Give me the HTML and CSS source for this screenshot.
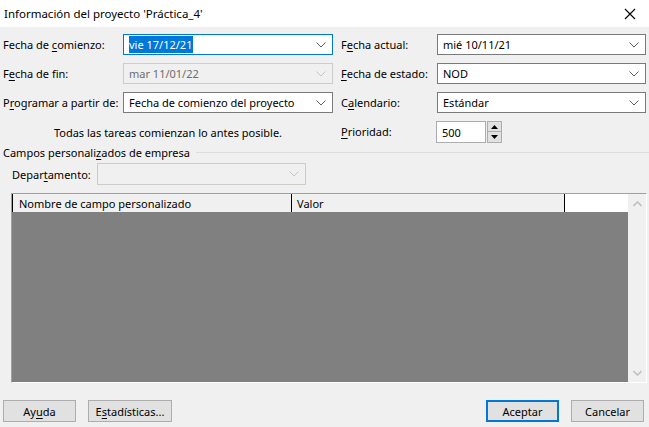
FILE: index.html
```html
<!DOCTYPE html>
<html lang="es">
<head>
<meta charset="utf-8">
<title>Información del proyecto</title>
<link rel="stylesheet" href="styles.css">
</head>
<body>
<div class="dialog">
  <div class="titlebar">
    <span class="title">Información del proyecto 'Práctica_4'</span>
    <svg class="close" width="12" height="12" viewBox="0 0 12 12"><path d="M1 1 L11 11 M11 1 L1 11" stroke="#000" stroke-width="1.1" fill="none"/></svg>
  </div>
  <div class="content">
    <div class="form">
      <label class="lbl">Fecha de <u>c</u>omienzo:</label>
      <div class="combo focus"><span class="val"><span class="sel">vie 17/12/21</span></span><svg class="arrow" width="10" height="6" viewBox="0 0 10 6"><path d="M0.5 0.5 L5 5 L9.5 0.5" stroke="#606060" fill="none"/></svg></div>
      <label class="lbl rl">F<u>e</u>cha actual:</label>
      <div class="combo"><span class="val">mié 10/11/21</span><svg class="arrow" width="10" height="6" viewBox="0 0 10 6"><path d="M0.5 0.5 L5 5 L9.5 0.5" stroke="#606060" fill="none"/></svg></div>

      <label class="lbl">F<u>e</u>cha de fin:</label>
      <div class="combo disabled"><span class="val">mar 11/01/22</span><svg class="arrow" width="10" height="6" viewBox="0 0 10 6"><path d="M0.5 0.5 L5 5 L9.5 0.5" stroke="#c4c4c4" fill="none"/></svg></div>
      <label class="lbl rl"><u>F</u>echa de estado:</label>
      <div class="combo"><span class="val">NOD</span><svg class="arrow" width="10" height="6" viewBox="0 0 10 6"><path d="M0.5 0.5 L5 5 L9.5 0.5" stroke="#606060" fill="none"/></svg></div>

      <label class="lbl">P<u>r</u>ogramar a partir de:</label>
      <div class="combo dark"><span class="val">Fecha de comienzo del proyecto</span><svg class="arrow" width="10" height="6" viewBox="0 0 10 6"><path d="M0.5 0.5 L5 5 L9.5 0.5" stroke="#606060" fill="none"/></svg></div>
      <label class="lbl rl">C<u>a</u>lendario:</label>
      <div class="combo"><span class="val">Estándar</span><svg class="arrow" width="10" height="6" viewBox="0 0 10 6"><path d="M0.5 0.5 L5 5 L9.5 0.5" stroke="#606060" fill="none"/></svg></div>

      <div class="note">Todas las tareas comienzan lo antes posible.</div>
      <label class="lbl rl prio"><u>P</u>rioridad:</label>
      <div class="spin">
        <div class="spin-input">500</div>
        <div class="spin-btns">
          <div class="sbtn"><svg width="7" height="4" viewBox="0 0 7 4"><path d="M3.5 0 L7 4 L0 4 Z" fill="#000"/></svg></div>
          <div class="sbtn"><svg width="7" height="4" viewBox="0 0 7 4"><path d="M0 0 L7 0 L3.5 4 Z" fill="#000"/></svg></div>
        </div>
      </div>
    </div>

    <div class="group-head"><span>Campos personali<u>z</u>ados de empresa</span><div class="rule"></div></div>
    <div class="dept">
      <label class="dlbl">Depar<u>t</u>amento:</label>
      <div class="combo disabled dcombo"><span class="val"></span><svg class="arrow" width="10" height="6" viewBox="0 0 10 6"><path d="M0.5 0.5 L5 5 L9.5 0.5" stroke="#c4c4c4" fill="none"/></svg></div>
    </div>

    <div class="grid">
      <div class="grid-main">
        <div class="ghead">
          <div class="hcell c1">Nombre de campo personalizado</div>
          <div class="hcell c2">Valor</div>
          <div class="hfill"></div>
        </div>
        <div class="gbody"></div>
      </div>
      <div class="vscroll">
        <svg width="9" height="6" viewBox="0 0 9 6"><path d="M0.5 5 L4.5 1 L8.5 5" stroke="#c0c0c0" stroke-width="1.6" fill="none"/></svg>
        <svg width="9" height="6" viewBox="0 0 9 6"><path d="M0.5 1 L4.5 5 L8.5 1" stroke="#c0c0c0" stroke-width="1.6" fill="none"/></svg>
      </div>
    </div>

    <div class="buttons">
      <div class="left">
        <button class="btn">Ay<u>u</u>da</button>
        <button class="btn wide">E<u>s</u>tadísticas...</button>
      </div>
      <div class="right">
        <button class="btn default">Aceptar</button>
        <button class="btn">Cancelar</button>
      </div>
    </div>
  </div>
</div>
</body>
</html>
```
FILE: styles.css
```css
* { box-sizing: border-box; }
html, body { margin: 0; padding: 0; }
body {
  width: 649px;
  height: 427px;
  overflow: hidden;
  font-family: "Noto Sans", "Open Sans", sans-serif;
  font-size: 11px;
  color: #000;
  background: #f0f0f0;
}
u { text-decoration: underline; text-underline-offset: 2px; text-decoration-thickness: 1px; }
.dialog { width: 649px; height: 427px; display: flex; flex-direction: column; }
.titlebar {
  height: 27px;
  background: #fff;
  display: flex;
  align-items: center;
  justify-content: space-between;
  padding: 0 13px 0 4px;
}
.title { font-size: 11.5px; line-height: 16px; }
.close { display: block; }
.content { flex: 1; background: #f0f0f0; padding: 7px 3px 0 3px; display: flex; flex-direction: column; }

.form {
  display: grid;
  grid-template-columns: 120px 210px 104px 209px;
  grid-template-rows: 21px 21px 21px 22px;
  row-gap: 8px;
}
.lbl { display: block; line-height: 21px; white-space: nowrap; }
.rl { padding-left: 8px; }
.combo {
  display: flex;
  align-items: center;
  justify-content: space-between;
  background: #fff;
  border: 1px solid #7a7a7a;
  padding: 0 6px 0 5px;
  height: 21px;
}
.combo.focus { border-color: #0078d7; }
.combo.disabled { background: #f0f0f0; border-color: #cccccc; color: #6d6d6d; padding-left: 0; }
.combo.disabled .val { align-self: stretch; display: flex; align-items: center; padding-left: 5px; }
.val { white-space: nowrap; line-height: 15px; }
.sel { background: #0078d7; color: #fff; padding: 1px 1px 1px 0; }
.arrow { display: block; flex: none; }

.note { grid-column: 1 / span 2; display: flex; align-items: center; justify-content: center; padding-left: 0; }
.prio { line-height: 22px; }
.spin { display: flex; height: 22px; }
.spin-input {
  width: 50px;
  height: 22px;
  background: #fff;
  border: 1px solid #adadad;
  display: flex;
  align-items: center;
  padding-left: 5px;
  margin-left: -1px;
}
.spin-btns { display: flex; flex-direction: column; margin-left: 1px; width: 15px; }
.sbtn {
  height: 11px;
  width: 15px;
  background: #e1e1e1;
  border: 1px solid #adadad;
  display: flex;
  align-items: center;
  justify-content: center;
}
.sbtn + .sbtn { border-top: none; height: 11px; }
.sbtn svg { display: block; }

.group-head { display: flex; align-items: center; margin-top: 1px; height: 16px; }
.group-head span { white-space: nowrap; }
.rule { flex: 1; height: 1px; background: #dcdcdc; margin-left: 6px; margin-right: -3px; }

.dept { display: flex; align-items: center; padding-left: 9px; margin-top: 3px; height: 22px; }
.dlbl { width: 85px; white-space: nowrap; }
.dcombo { width: 209px; height: 22px; }

.grid {
  margin-top: 8px;
  margin-left: 8px;
  height: 190px;
  display: flex;
  border-top: 1px solid #a0a0a0;
  border-left: 1px solid #a0a0a0;
  border-right: 1px solid #ffffff;
  border-bottom: 1px solid #ffffff;
  width: 636px;
}
.grid-main { width: 616px; display: flex; flex-direction: column; }
.ghead { display: flex; height: 18px; background: #f0f0f0; }
.hcell { display: flex; align-items: center; padding-left: 6px; white-space: nowrap; border-left: 1px solid #000; }
.c1 { width: 279px; }
.c2 { width: 273px; padding-left: 5px; }
.hfill { flex: 1; background: #fff; border-left: 1px solid #000; }
.gbody { flex: 1; background: #808080; }
.vscroll {
  flex: 1;
  background: #f0f0f0;
  display: flex;
  flex-direction: column;
  justify-content: space-between;
  align-items: center;
  padding: 7px 0 6px 0;
}
.vscroll svg { display: block; }

.buttons { display: flex; justify-content: space-between; margin-top: 17px; padding-right: 2px; }
.left, .right { display: flex; gap: 12px; }
.btn {
  font-family: inherit;
  font-size: 11px;
  color: #000;
  width: 73px;
  height: 22px;
  background: #e1e1e1;
  border: 1px solid #adadad;
  padding: 0;
  display: flex;
  align-items: center;
  justify-content: center;
}
.btn.wide { width: 84px; }
.btn.default { border: 2px solid #0078d7; }
```
